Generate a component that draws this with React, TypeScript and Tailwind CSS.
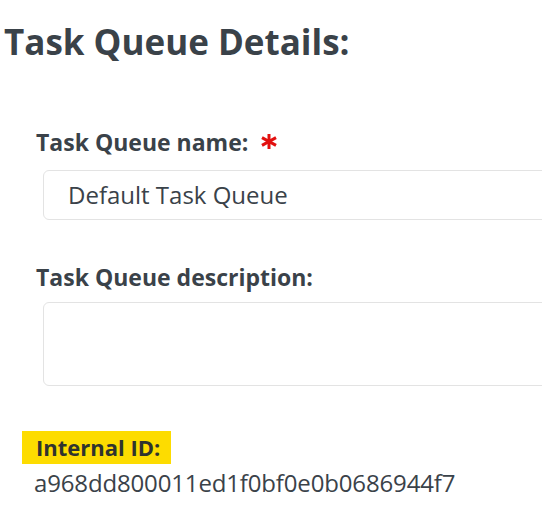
export default function App() {
  return (
    <div
      className="w-[542px] h-[514px] overflow-hidden bg-white text-[#3a4249]"
      style={{ fontFamily: '"Open Sans", Lato, sans-serif' }}
    >
      <h1 className="pl-[4px] pt-[20px] text-[35px] leading-[44px] font-bold">
        Task Queue Details:
      </h1>
      <div className="mt-[64px]">
        <div className="pl-[36px] flex items-center h-[28px] text-[23px] leading-[28px] font-bold">
          <span>Task Queue name:</span>
          <svg
            className="ml-[13px] mt-[-2px]"
            width="16"
            height="15"
            viewBox="0 0 16 15"
            fill="none"
            stroke="#e2100f"
            strokeWidth="3"
            strokeLinecap="butt"
          >
            <line x1="8" y1="0" x2="8" y2="15" />
            <line x1="1" y1="3.6" x2="15" y2="11.4" />
            <line x1="1" y1="11.4" x2="15" y2="3.6" />
          </svg>
        </div>
        <div className="ml-[43px] mt-[14px] w-[560px] h-[50px] border border-[#e3e3e3] rounded-[6px] pl-[24px] text-[24px] leading-[48px]">
          Default Task Queue
        </div>
        <div className="pl-[36px] mt-[43px] text-[23px] leading-[28px] font-bold">Task Queue description:</div>
        <div className="ml-[43px] mt-[11px] w-[560px] h-[84px] border border-[#e3e3e3] rounded-[6px]" />
        <div className="ml-[22px] mt-[45px] w-[149px] h-[33px] bg-[#fddc00] pl-[14px] text-[22px] leading-[33px] font-bold text-[#2f332f]">
          Internal ID:
        </div>
        <div className="pl-[34px] mt-[5px] text-[24px] leading-[28px] tracking-[-0.15px]">
          a968dd800011ed1f0bf0e0b0686944f7
        </div>
      </div>
    </div>
  );
}
